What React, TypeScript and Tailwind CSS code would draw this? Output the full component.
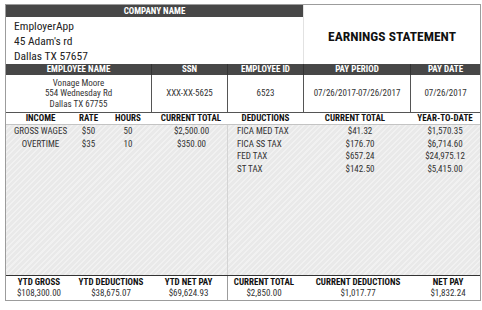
const font = "font-['Liberation_Sans_Narrow','Roboto_Condensed','DejaVu_Sans_Condensed',sans-serif]";

const info = [
  { label: "EMPLOYEE NAME", value: ["Vonage Moore", "554 Wednesday Rd", "Dallas TX 67755"] },
  { label: "SSN", value: ["XXX-XX-5625"] },
  { label: "EMPLOYEE ID", value: ["6523"] },
  { label: "PAY PERIOD", value: ["07/26/2017-07/26/2017"] },
  { label: "PAY DATE", value: ["07/26/2017"] },
];

const income = [
  ["GROSS WAGES", "$50", "50", "$2,500.00"],
  ["OVERTIME", "$35", "10", "$350.00"],
];

const deductions = [
  ["FICA MED TAX", "$41.32", "$1,570.35"],
  ["FICA SS TAX", "$176.70", "$6,714.60"],
  ["FED TAX", "$657.24", "$24,975.12"],
  ["ST TAX", "$142.50", "$5,415.00"],
];

const hatch =
  "bg-[repeating-linear-gradient(135deg,#e9e9e9_0px,#e9e9e9_2.5px,#f1f1f1_2.5px,#f1f1f1_4px)]";

export default function App() {
  return (
    <div className={`h-[310px] w-[482px] bg-white pt-[4px] pl-[5px] text-[#333] ${font}`}>
      <div className="w-[476px] border border-[#9c9c9c]">
        {/* Company + title */}
        <div className="flex h-[59px]">
          <div className="w-[297px]">
            <div className="h-[12px] bg-[#474747] text-center text-[9px] font-bold leading-[12px] text-white">
              COMPANY NAME
            </div>
            <div className="pt-[2px] pl-[8px] text-[11.5px] leading-[15px] text-[#222]">
              <div>EmployerApp</div>
              <div>45 Adam's rd</div>
              <div>Dallas TX 57657</div>
            </div>
          </div>
          <div className="flex flex-1 items-center justify-center border-l border-[#e2e2e2] pt-[4px] text-[13.5px] font-bold text-[#111]">
            EARNINGS STATEMENT
          </div>
        </div>

        {/* Employee info */}
        <div className="grid grid-cols-[146px_76px_76px_107px_1fr]">
          {info.map((c, i) => (
            <div
              key={c.label}
              className={`h-[11px] bg-[#474747] text-center text-[9px] font-bold leading-[11px] text-white ${
                i < info.length - 1 ? "border-r border-[#333]" : ""
              }`}
            >
              {c.label}
            </div>
          ))}
          {info.map((c, i) => (
            <div
              key={c.label + "v"}
              className={`flex h-[37px] flex-col items-center justify-center text-[9px] leading-[10.5px] ${
                i < info.length - 1 ? "border-r border-[#555]" : ""
              }`}
            >
              {c.value.map((v) => (
                <div key={v}>{v}</div>
              ))}
            </div>
          ))}
        </div>

        {/* Column headers */}
        <div className="flex h-[13px] border-t border-b border-t-[#555] border-b-[#c4c4c4] text-[9px] font-bold leading-[11px] text-[#111]">
          <div className="grid w-[222px] grid-cols-[69px_27px_52px_1fr] text-center">
            <div>INCOME</div>
            <div>RATE</div>
            <div>HOURS</div>
            <div>CURRENT TOTAL</div>
          </div>
          <div className="grid flex-1 grid-cols-[72px_110px_1fr] text-center">
            <div className="pl-[3px]">DEDUCTIONS</div>
            <div>CURRENT TOTAL</div>
            <div>YEAR-TO-DATE</div>
          </div>
        </div>

        {/* Body */}
        <div className={`flex h-[150px] text-[9px] leading-[12.5px] ${hatch}`}>
          <div className="w-[222px] border-r border-[#d4d4d4]">
            {income.map((r) => (
              <div key={r[0]} className="grid grid-cols-[69px_27px_52px_1fr] text-center">
                <div>{r[0]}</div>
                <div>{r[1]}</div>
                <div>{r[2]}</div>
                <div className="pl-[2px]">{r[3]}</div>
              </div>
            ))}
          </div>
          <div className="flex-1">
            {deductions.map((r) => (
              <div key={r[0]} className="grid grid-cols-[72px_110px_1fr]">
                <div className="pl-[9px] whitespace-nowrap">{r[0]}</div>
                <div className="pl-[10px] text-center">{r[1]}</div>
                <div className="text-center">{r[2]}</div>
              </div>
            ))}
          </div>
        </div>

        {/* Totals */}
        <div className="flex border-t border-[#333] text-center text-[9px]">
          <div className="grid w-[222px] grid-cols-[66px_78px_1fr] border-r border-[#9c9c9c]">
            <div className="h-[12px] font-bold leading-[13px] text-[#111]">YTD GROSS</div>
            <div className="h-[12px] font-bold leading-[13px] text-[#111]">YTD DEDUCTIONS</div>
            <div className="h-[12px] font-bold leading-[13px] text-[#111]">YTD NET PAY</div>
            <div className="h-[12px] leading-[11px]">$108,300.00</div>
            <div className="h-[12px] leading-[11px]">$38,675.07</div>
            <div className="h-[12px] leading-[11px]">$69,624.93</div>
          </div>
          <div className="grid flex-1 grid-cols-[72px_116px_1fr]">
            <div className="h-[12px] font-bold leading-[13px] text-[#111]">CURRENT TOTAL</div>
            <div className="h-[12px] font-bold leading-[13px] text-[#111]">CURRENT DEDUCTIONS</div>
            <div className="h-[12px] font-bold leading-[13px] text-[#111]">NET PAY</div>
            <div className="h-[12px] leading-[11px]">$2,850.00</div>
            <div className="h-[12px] leading-[11px]">$1,017.77</div>
            <div className="h-[12px] leading-[11px]">$1,832.24</div>
          </div>
        </div>
      </div>
    </div>
  );
}
